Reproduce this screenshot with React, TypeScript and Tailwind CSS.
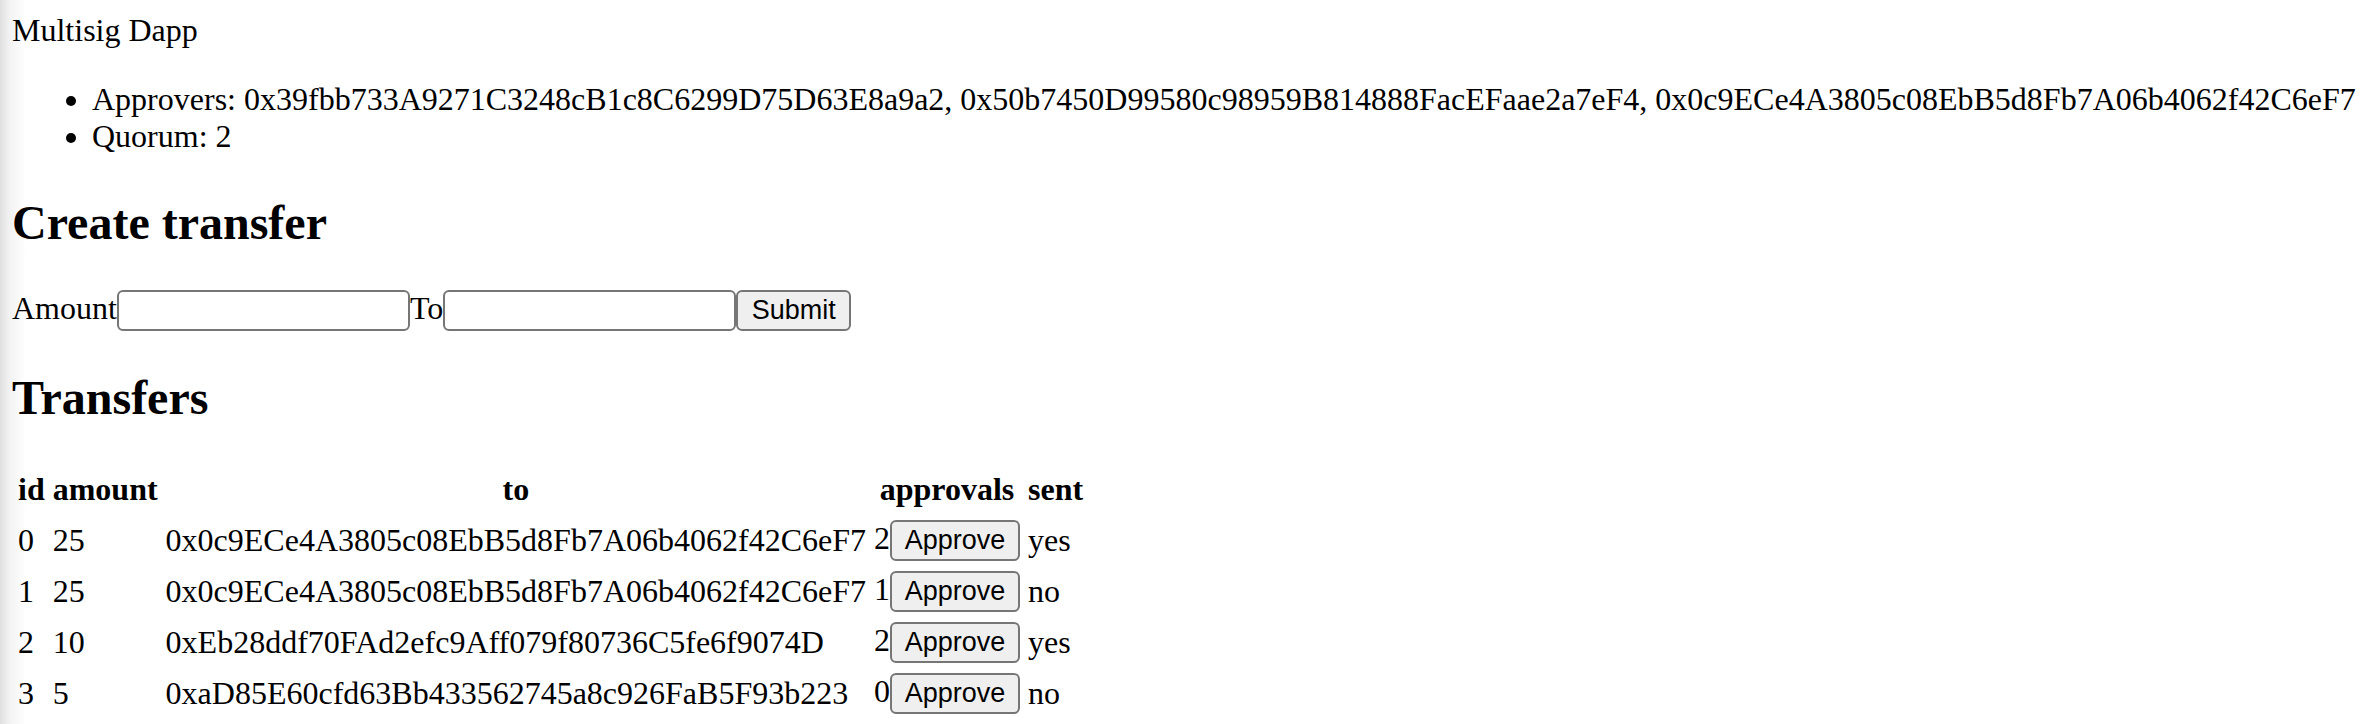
const approvers = [
  "0x39fbb733A9271C3248cB1c8C6299D75D63E8a9a2",
  "0x50b7450D99580c98959B814888FacEFaae2a7eF4",
  "0x0c9ECe4A3805c08EbB5d8Fb7A06b4062f42C6eF7",
];

const transfers = [
  { id: 0, amount: 25, to: "0x0c9ECe4A3805c08EbB5d8Fb7A06b4062f42C6eF7", approvals: 2, sent: true },
  { id: 1, amount: 25, to: "0x0c9ECe4A3805c08EbB5d8Fb7A06b4062f42C6eF7", approvals: 1, sent: false },
  { id: 2, amount: 10, to: "0xEb28ddf70FAd2efc9Aff079f80736C5fe6f9074D", approvals: 2, sent: true },
  { id: 3, amount: 5, to: "0xaD85E60cfd63Bb433562745a8c926FaB5F93b223", approvals: 0, sent: false },
];

export default function App() {
  return (
    <div className="min-h-screen bg-[linear-gradient(to_right,#e0e0e0_0px,#f3f3f3_10px,#ffffff_26px)] p-[12px] font-['Liberation_Serif',serif] text-[32px] leading-[normal] text-black">
      <div>Multisig Dapp</div>
      <ul className="my-[32px] list-disc whitespace-nowrap pl-[80px]">
        <li>Approvers: {approvers.join(", ")}</li>
        <li>Quorum: 2</li>
      </ul>
      <h2 className="my-[39.84px] text-[48px] font-bold leading-[normal]">Create transfer</h2>
      <form className="block" onSubmit={(e) => e.preventDefault()}>
        <label>Amount</label>
        <input
          type="text"
          className="inline-block h-[41px] w-[293px] rounded-[6px] border-2 border-[#767676] bg-white px-[4px] align-baseline font-['Liberation_Sans',sans-serif] text-[26.67px] leading-[normal]"
        />
        <label>To</label>
        <input
          type="text"
          className="inline-block h-[41px] w-[293px] rounded-[6px] border-2 border-[#767676] bg-white px-[4px] align-baseline font-['Liberation_Sans',sans-serif] text-[26.67px] leading-[normal]"
        />
        <button
          type="submit"
          className="inline-block h-[41px] w-[115px] rounded-[6px] border-2 border-[#767676] bg-[#efefef] text-center align-baseline font-['Liberation_Sans',sans-serif] text-[27px] leading-[normal]"
        >
          Submit
        </button>
      </form>
      <h2 className="my-[39.84px] text-[48px] font-bold leading-[normal]">Transfers</h2>
      <table className="border-separate border-spacing-[4px]">
        <thead>
          <tr>
            <th className="p-[2px] text-center font-bold">id</th>
            <th className="p-[2px] text-center font-bold">amount</th>
            <th className="p-[2px] text-center font-bold">to</th>
            <th className="p-[2px] text-center font-bold">approvals</th>
            <th className="p-[2px] text-center font-bold">sent</th>
          </tr>
        </thead>
        <tbody>
          {transfers.map((t) => (
            <tr key={t.id}>
              <td className="h-[47px] px-[2px] pb-[0px] pt-[5px] align-middle">{t.id}</td>
              <td className="h-[47px] px-[2px] pb-[0px] pt-[5px] align-middle">{t.amount}</td>
              <td className="h-[47px] px-[2px] pb-[0px] pt-[5px] align-middle">{t.to}</td>
              <td className="h-[47px] whitespace-nowrap px-[2px] pb-[0px] pt-[5px] align-middle">
                {t.approvals}
                <button
                  type="button"
                  className="inline-block h-[41px] w-[130px] rounded-[6px] border-2 border-[#767676] bg-[#efefef] text-center align-baseline font-['Liberation_Sans',sans-serif] text-[27px] leading-[normal]"
                >
                  Approve
                </button>
              </td>
              <td className="h-[47px] px-[2px] pb-[0px] pt-[5px] align-middle">{t.sent ? "yes" : "no"}</td>
            </tr>
          ))}
        </tbody>
      </table>
    </div>
  );
}
